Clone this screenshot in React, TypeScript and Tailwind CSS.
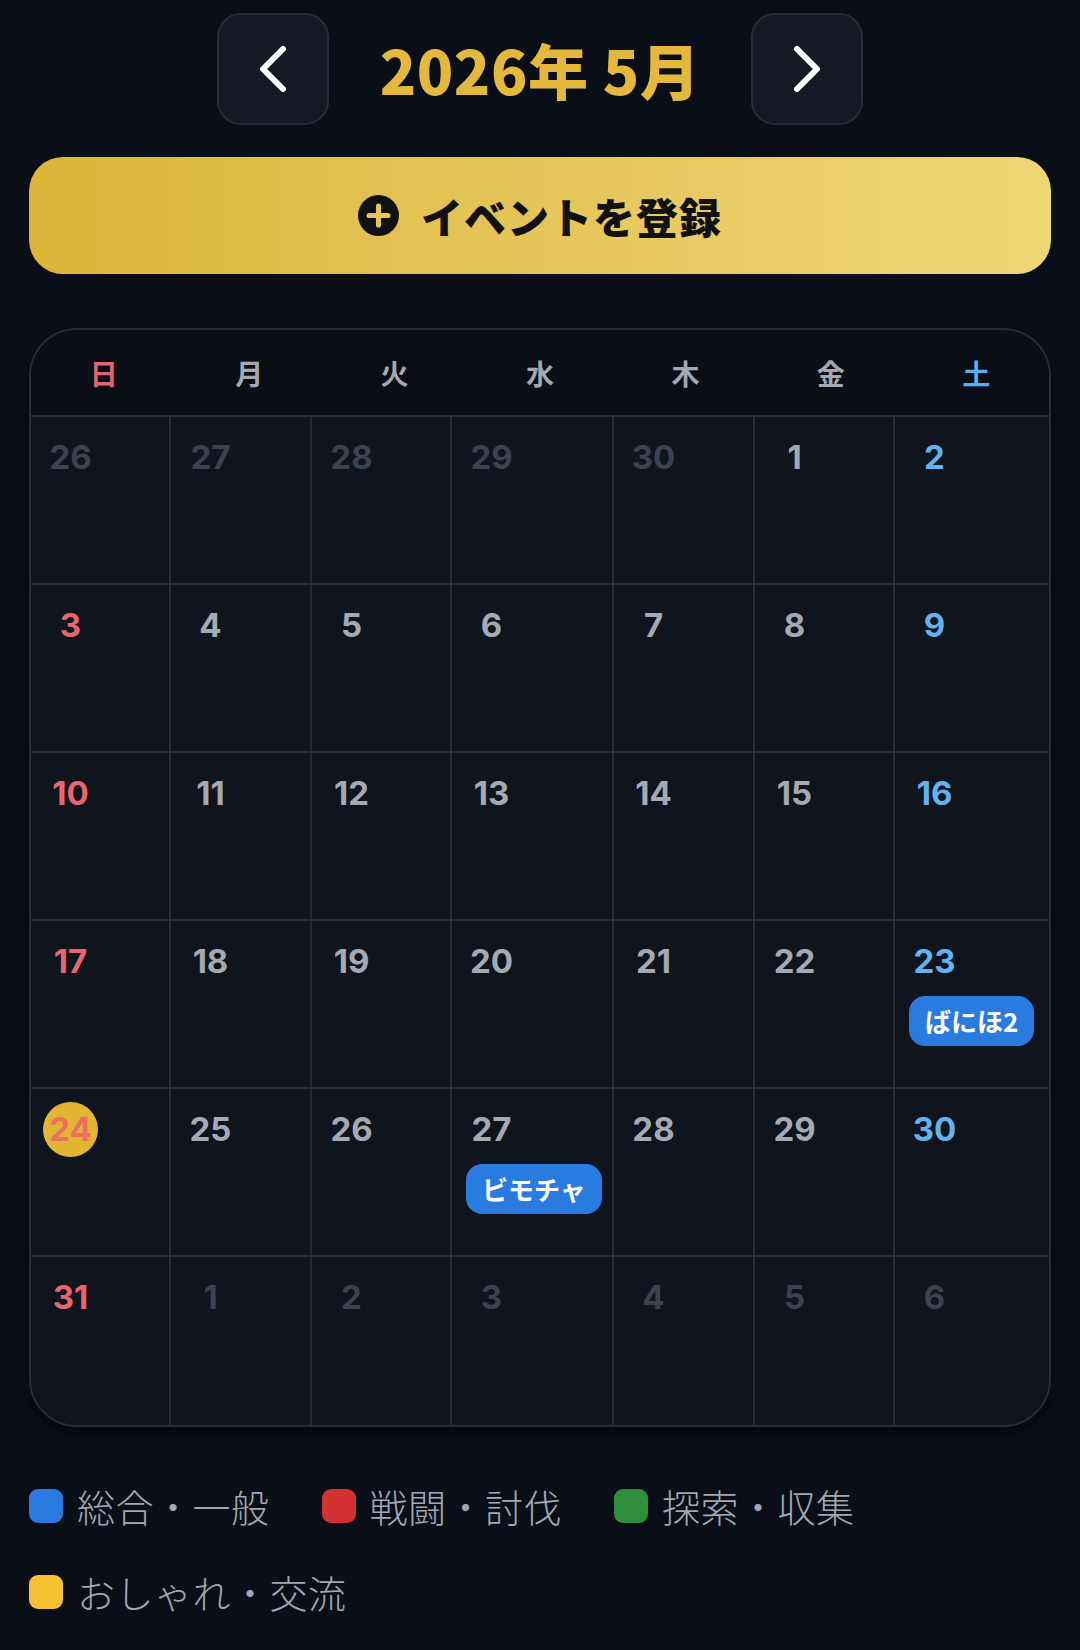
// Monthly event calendar: month nav, register button, 7-col grid, category legend.
import { ChevronLeft, ChevronRight } from 'lucide-react';

type Tone = 'muted' | 'normal' | 'sun' | 'sat';

interface Day {
  n: number;
  tone: Tone;
  today?: boolean;
  event?: string;
}

const WEEKDAYS = [
  { label: '日', cls: 'text-[#e2666f]' },
  { label: '月', cls: 'text-[#a3a8b2]' },
  { label: '火', cls: 'text-[#a3a8b2]' },
  { label: '水', cls: 'text-[#a3a8b2]' },
  { label: '木', cls: 'text-[#a3a8b2]' },
  { label: '金', cls: 'text-[#a3a8b2]' },
  { label: '土', cls: 'text-[#5aaef2]' },
];

const TONE_CLS: Record<Tone, string> = {
  muted: 'text-[#3c424e]',
  normal: 'text-[#a4a9b4]',
  sun: 'text-[#e8666f]',
  sat: 'text-[#62b2f2]',
};

function buildWeeks(): Day[][] {
  const cur = (n: number, col: number): Day => ({
    n,
    tone: col === 0 ? 'sun' : col === 6 ? 'sat' : 'normal',
  });
  const days: Day[] = [];
  [26, 27, 28, 29, 30].forEach((n) => days.push({ n, tone: 'muted' }));
  for (let n = 1; n <= 31; n++) days.push(cur(n, days.length % 7));
  [1, 2, 3, 4, 5, 6].forEach((n) => days.push({ n, tone: 'muted' }));
  const d23 = days.find((d) => d.n === 23 && d.tone !== 'muted');
  if (d23) d23.event = 'ばにほ2';
  const d27 = days.find((d) => d.n === 27 && d.tone !== 'muted');
  if (d27) d27.event = 'ビモチャ';
  const d24 = days.find((d) => d.n === 24);
  if (d24) d24.today = true;
  const weeks: Day[][] = [];
  for (let i = 0; i < days.length; i += 7) weeks.push(days.slice(i, i + 7));
  return weeks;
}

const LEGEND = [
  { label: '総合・一般', color: 'bg-[#2b7ae0]' },
  { label: '戦闘・討伐', color: 'bg-[#d13131]' },
  { label: '探索・収集', color: 'bg-[#2f8d3b]' },
  { label: 'おしゃれ・交流', color: 'bg-[#f5c133]' },
];

const FONT = { fontFamily: 'Inter, "Noto Sans CJK JP", sans-serif' };

export default function App() {
  const weeks = buildWeeks();

  return (
    <div
      className="min-h-[1650px] w-[1080px] bg-[#0a0e16] px-[29px] pt-[13px]"
      style={{ fontFamily: '"Noto Sans CJK JP", sans-serif' }}
    >
      {/* Month nav */}
      <div className="flex items-center justify-center gap-[51px]">
        <button className="flex h-[112px] w-[112px] items-center justify-center rounded-[24px] border-2 border-[#262b36] bg-[#141923]">
          <ChevronLeft size={80} strokeWidth={1.8} className="text-white" />
        </button>
        <h1 className="text-[60px] font-black leading-none tracking-[0.5px] text-[#e3b83c]">2026年 5月</h1>
        <button className="flex h-[112px] w-[112px] items-center justify-center rounded-[24px] border-2 border-[#262b36] bg-[#141923]">
          <ChevronRight size={80} strokeWidth={1.8} className="text-white" />
        </button>
      </div>

      {/* Register */}
      <button className="mt-[32px] flex h-[117px] w-full items-center justify-center gap-[22px] rounded-[34px] bg-gradient-to-r from-[#dcb43a] to-[#eed775]">
        <svg width="41" height="41" viewBox="0 0 24 24">
          <circle cx="12" cy="12" r="12" fill="#111" />
          <path d="M12 6.5v11M6.5 12h11" stroke="#e6c656" strokeWidth="3" strokeLinecap="round" />
        </svg>
        <span className="text-[42px] font-black tracking-[1px] text-[#111]">イベントを登録</span>
      </button>

      {/* Calendar */}
      <div className="mt-[54px] overflow-hidden rounded-[48px] border-2 border-[#272c37] bg-[#10141c] shadow-[0_6px_12px_rgba(0,0,0,0.5)]">
        <div className="grid h-[87px] grid-cols-7 items-center border-b-2 border-[#262b35] bg-[#0b0e15]">
          {WEEKDAYS.map((w) => (
            <div key={w.label} className={`text-center text-[28px] font-bold ${w.cls}`}>
              {w.label}
            </div>
          ))}
        </div>
        {weeks.map((week, wi) => (
          <div
            key={wi}
            className={`grid h-[168px] grid-cols-[140px_141px_140px_162px_141px_140px_1fr] ${
              wi < weeks.length - 1 ? 'border-b-2 border-[#262b35]' : ''
            }`}
          >
            {week.map((d, di) => (
              <div
                key={di}
                className={`flex flex-col items-start pl-[12px] pt-[13px] ${di < 6 ? 'border-r-2 border-[#262b35]' : ''}`}
              >
                <span
                  className={`flex h-[55px] min-w-[55px] items-center justify-center rounded-full text-[33px] font-bold ${
                    d.today ? 'bg-[#e3b532] text-[#ee6f5f]' : TONE_CLS[d.tone]
                  }`}
                  style={FONT}
                >
                  {d.n}
                </span>
                {d.event && (
                  <span className="mt-[7px] ml-[2px] rounded-[16px] bg-[#2a7be0] px-[16px] text-[26px] font-bold leading-[50px] text-white">
                    {d.event}
                  </span>
                )}
              </div>
            ))}
          </div>
        ))}
      </div>

      {/* Legend */}
      <div className="mt-[58px] flex flex-wrap gap-x-[52px] gap-y-[44px]">
        {LEGEND.map((l) => (
          <div key={l.label} className="flex items-center gap-[14px]">
            <span className={`h-[34px] w-[34px] rounded-[9px] ${l.color}`} />
            <span className="text-[38px] font-light leading-[42px] tracking-[0.5px] text-[#a2a7b1]">{l.label}</span>
          </div>
        ))}
      </div>
    </div>
  );
}
